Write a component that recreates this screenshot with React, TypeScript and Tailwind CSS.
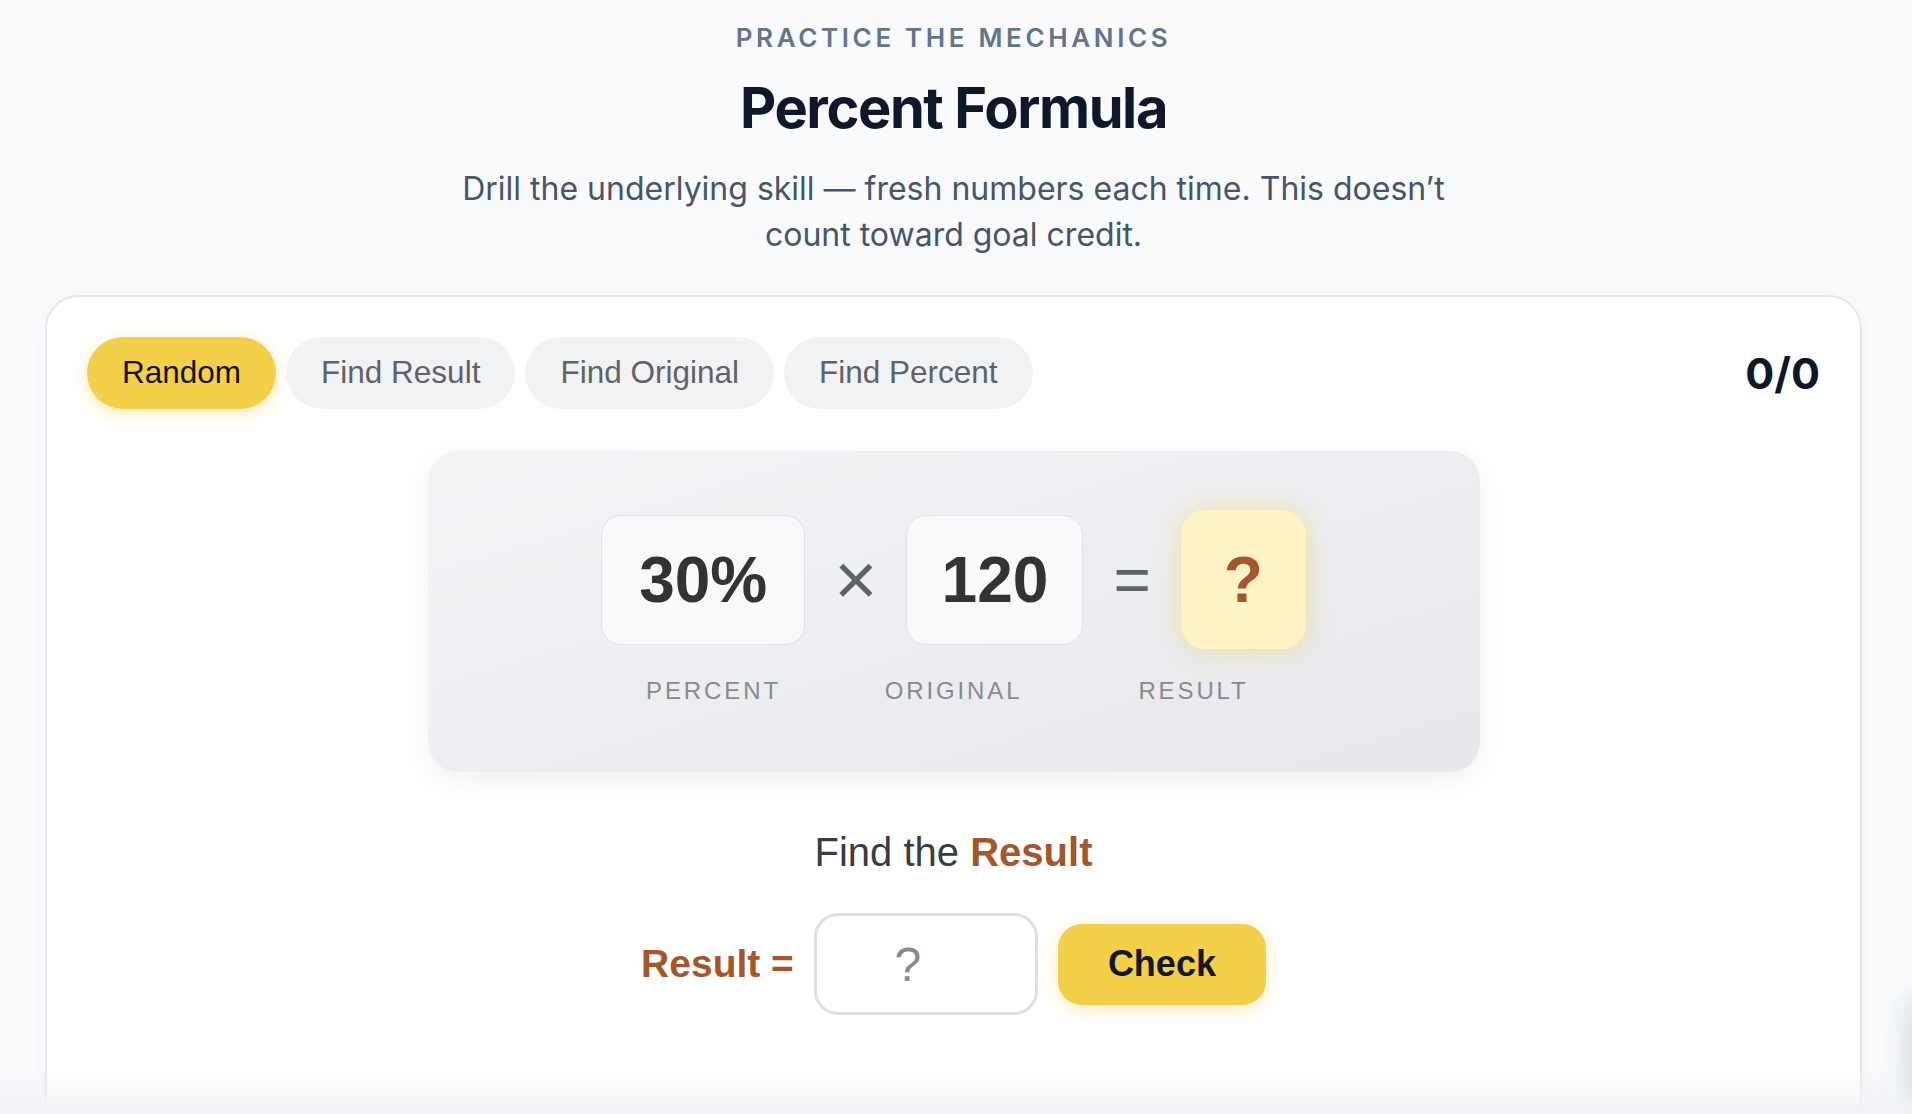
import { useState } from "react";

const tabs = ["Random", "Find Result", "Find Original", "Find Percent"];

const inter = "font-['Inter',sans-serif]";
const helv = "font-['Liberation_Sans',Arial,sans-serif]";

export default function App() {
  const [active, setActive] = useState("Random");
  const [answer, setAnswer] = useState("");

  return (
    <div className={`relative h-[1114px] overflow-hidden bg-[#f8fafc] ${inter}`}>
      <div className="w-[1907px] flex flex-col items-center">
        <p className="pt-[22px] text-[26px] leading-[32px] font-semibold tracking-[0.14em] uppercase text-[#64748b]">
          Practice the mechanics
        </p>
        <h1 className="mt-[23px] text-[56px] leading-[62px] font-bold tracking-tight text-[#0f172a]">
          Percent Formula
        </h1>
        <p className="mt-[27px] max-w-[1030px] text-center text-[32px] leading-[46px] text-[#475569]">
          Drill the underlying skill — fresh numbers each time. This doesn’t count toward goal credit.
        </p>

        <div className="mt-[37px] self-stretch mx-[45px] rounded-[34px] border-2 border-[#e5e7eb] bg-white p-[40px] pb-[200px] shadow-[0_4px_16px_rgba(15,23,42,0.04)]">
          <div className="flex items-center justify-between">
            <div className={`flex gap-[10px] ${helv}`}>
              {tabs.map((t) => (
                <button
                  key={t}
                  onClick={() => setActive(t)}
                  className={
                    t === active
                      ? "h-[72px] px-[35px] rounded-full text-[31.5px] bg-[#f4cf4a] text-[#111111] shadow-[0_4px_16px_rgba(244,207,74,0.45)]"
                      : "h-[72px] px-[35px] rounded-full text-[31.5px] bg-[#f1f2f4] text-[#5f6368]"
                  }
                >
                  {t}
                </button>
              ))}
            </div>
            <span className="text-[43px] font-bold text-[#0f172a]">0/0</span>
          </div>

          <div className="mx-auto mt-[42px] w-[1052px] rounded-[30px] bg-linear-to-br from-[#f3f4f6] to-[#e6e8ec] pt-[59px] pb-[65px] shadow-[0_8px_30px_rgba(15,23,42,0.06)]">
            <div className={`flex items-center justify-center ${helv}`}>
              <div className="h-[130px] w-[204px] flex items-center justify-center rounded-[20px] border-[1.5px] border-[#e0e2e6] bg-[#f8f9fb] text-[64px] font-bold text-[#333333]">
                30%
              </div>
              <span className="ml-[29px] text-[74px] leading-none text-[#5f6368]">×</span>
              <div className="ml-[29px] h-[130px] w-[177px] flex items-center justify-center rounded-[20px] border-[1.5px] border-[#e0e2e6] bg-[#f8f9fb] text-[64px] font-bold text-[#333333]">
                120
              </div>
              <span className="ml-[30px] text-[64px] leading-none text-[#5f6368]">=</span>
              <div className="ml-[30px] h-[139px] w-[125px] flex items-center justify-center rounded-[24px] bg-[#fef3c7] text-[64px] font-bold text-[#a5562a] shadow-[0_0_28px_rgba(244,207,74,0.45)]">
                ?
              </div>
            </div>
            <div className={`mx-auto mt-[26px] grid w-[720px] grid-cols-3 text-center text-[24px] leading-[32px] tracking-[0.12em] text-[#8a8a8a] ${helv}`}>
              <span>PERCENT</span>
              <span>ORIGINAL</span>
              <span>RESULT</span>
            </div>
          </div>

          <p className={`mt-[56px] text-center text-[40px] leading-[48px] text-[#3c3c3c] ${helv}`}>
            Find the <span className="font-bold text-[#a5562a]">Result</span>
          </p>

          <div className={`mt-[37px] flex items-center justify-center gap-[20px] ${helv}`}>
            <span className="text-[39px] font-bold text-[#a5562a]">Result =</span>
            <input
              value={answer}
              onChange={(e) => setAnswer(e.target.value)}
              placeholder="?"
              className="h-[102px] w-[224px] rounded-[24px] border-[3px] border-[#e0e0e0] bg-white pl-[10px] pr-[46px] text-center text-[48px] text-[#333333] placeholder:text-[#8a8a8a] outline-none"
            />
            <button className="h-[81px] w-[208px] rounded-[24px] bg-[#f4cf4a] text-[36px] font-bold text-[#111827] shadow-[0_4px_18px_rgba(244,207,74,0.4)]">
              Check
            </button>
          </div>
        </div>
      </div>

      <div className="pointer-events-none absolute bottom-0 left-0 right-0 h-[44px] bg-linear-to-b from-transparent to-[#f1f3f6]" />
      <div className="pointer-events-none absolute right-[-40px] bottom-[10px] h-[110px] w-[48px] rounded-full bg-[#9aa0aa] opacity-30 blur-md" />
    </div>
  );
}
